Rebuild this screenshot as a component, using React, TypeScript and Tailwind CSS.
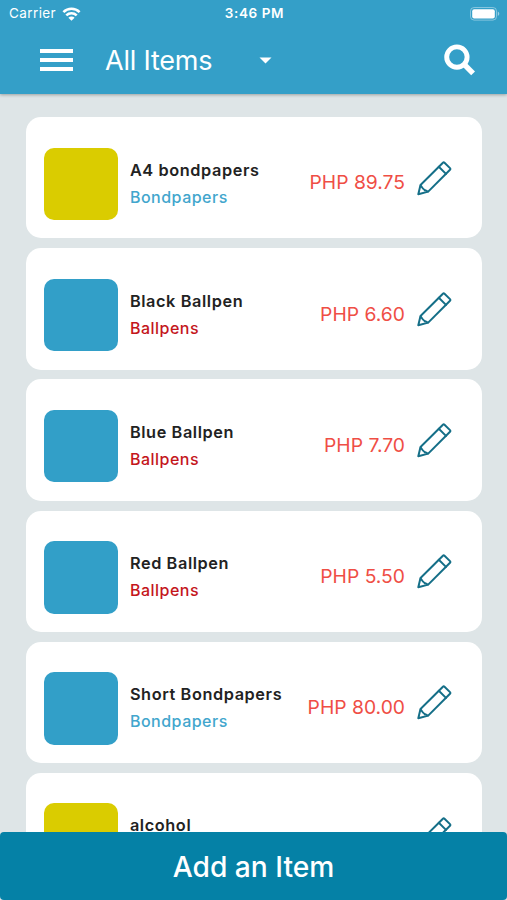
type Item = {
  name: string;
  category?: string;
  price?: string;
  color: string;
  categoryColor?: string;
};

const YELLOW = 'bg-[#dacc00]';
const BLUE = 'bg-[#329fc8]';

const items: Item[] = [
  { name: 'A4 bondpapers', category: 'Bondpapers', price: '89.75', color: YELLOW, categoryColor: 'text-[#42a6cd]' },
  { name: 'Black Ballpen', category: 'Ballpens', price: '6.60', color: BLUE, categoryColor: 'text-[#c4161c]' },
  { name: 'Blue Ballpen', category: 'Ballpens', price: '7.70', color: BLUE, categoryColor: 'text-[#c4161c]' },
  { name: 'Red Ballpen', category: 'Ballpens', price: '5.50', color: BLUE, categoryColor: 'text-[#c4161c]' },
  { name: 'Short Bondpapers', category: 'Bondpapers', price: '80.00', color: BLUE, categoryColor: 'text-[#42a6cd]' },
  { name: 'alcohol', color: YELLOW },
];

function WifiIcon() {
  return (
    <svg className="ml-[6px] h-[14px] w-[19px]" viewBox="0 0 18 14" fill="none" stroke="white" strokeWidth="2.6">
      <path d="M0.9 5.1a11.6 11.6 0 0 1 16.2 0" />
      <path d="M3.8 8.4a7.5 7.5 0 0 1 10.4 0" />
      <path d="M9 13.7 5.9 10.7a4.4 4.4 0 0 1 6.2 0Z" fill="white" stroke="none" />
    </svg>
  );
}

function BatteryIcon() {
  return (
    <svg className="h-[14px] w-[30px]" viewBox="0 0 30 14">
      <rect x="0.5" y="0.5" width="26" height="12.6" rx="3.6" fill="none" stroke="white" strokeOpacity="0.4" />
      <rect x="2.2" y="2.2" width="22.6" height="9.2" rx="2" fill="white" />
      <path d="M27.8 4.6c2 .8 2 3.6 0 4.4Z" fill="white" fillOpacity="0.5" />
    </svg>
  );
}

function SearchIcon() {
  return (
    <svg className="h-8 w-8" viewBox="0 0 32 32" fill="none" stroke="white">
      <circle cx="12.9" cy="13.1" r="10.2" strokeWidth="4.9" />
      <path d="m20.4 20.6 8.7 8.7" strokeWidth="5.4" />
    </svg>
  );
}

function PencilIcon() {
  return (
    <svg
      className="h-[35px] w-[35px]"
      viewBox="0 0 35 35"
      fill="none"
      stroke="#156f88"
      strokeWidth="2"
      strokeLinejoin="round"
      strokeLinecap="round"
    >
      <path d="M1.3 33.3 3.5 24 25.9 1.7q.8-.8 1.6 0L33 7.1q.8.8 0 1.6L11.2 30.6Z" />
      <path d="m21.8 5.8 7.2 7.1" />
      <path d="m3.8 24.6 2.3 3.1M7 28.4l.9 1M8.6 29.2l2.2 1.3" strokeWidth="1.9" />
    </svg>
  );
}

function ItemCard({ item }: { item: Item }) {
  return (
    <div className="flex h-[121.4px] shrink-0 items-start rounded-[15px] bg-white pl-[18.3px] pr-[30px]">
      <div className={`mt-[30.5px] h-[72.6px] w-[73.6px] shrink-0 rounded-[10px] ${item.color}`} />
      <div className="ml-[12px] mt-[39.5px] flex flex-col whitespace-nowrap text-base leading-[27px]">
        <span className="text-[16.3px] font-semibold tracking-[0.6px] text-[#222]">{item.name}</span>
        {item.category && (
          <span className={`font-medium tracking-[0.5px] ${item.categoryColor}`}>{item.category}</span>
        )}
      </div>
      {item.price && (
        <span className="ml-auto mt-[51.4px] whitespace-nowrap text-[19.3px] leading-[28px] text-[#ef4e45]">
          PHP {item.price}
        </span>
      )}
      <button className={item.price ? 'ml-[12px] mt-[43.7px]' : 'ml-auto mt-[43.7px]'} aria-label="Edit">
        <PencilIcon />
      </button>
    </div>
  );
}

export default function App() {
  return (
    <div className="flex h-[900px] w-[507px] flex-col overflow-hidden bg-[#dee5e7] font-['Inter','Liberation_Sans',sans-serif]">
      <header className="z-10 h-[94px] shrink-0 bg-[#349fc8] text-white shadow-[0_1px_3px_rgba(0,0,0,0.3)]">
        <div className="grid h-[27px] grid-cols-3 items-center pl-[9px] pr-[7px] text-[13.5px]">
          <div className="flex items-center">
            <span className="tracking-[0.4px]">Carrier</span>
            <WifiIcon />
          </div>
          <span className="text-center font-semibold tracking-[0.6px]">3:46 PM</span>
          <div className="flex justify-end">
            <BatteryIcon />
          </div>
        </div>
        <div className="flex h-[65px] items-center pl-[40px] pr-[31px]">
          <button className="flex w-[33px] flex-col gap-[5px]" aria-label="Menu">
            <span className="h-1 bg-white" />
            <span className="h-1 bg-white" />
            <span className="h-1 bg-white" />
          </button>
          <span className="ml-[32px] w-[154px] whitespace-nowrap pt-[3px] text-[27px] tracking-[-0.2px]">All Items</span>
          <svg className="mt-[1px] h-[7px] w-[13px]" viewBox="0 0 13 7">
            <path d="M0.5 0.4h12l-6 6.2Z" fill="white" />
          </svg>
          <button className="ml-auto" aria-label="Search">
            <SearchIcon />
          </button>
        </div>
      </header>
      <main className="flex min-h-0 flex-1 flex-col gap-[9.8px] overflow-hidden pl-[26px] pr-[25px] pt-[23px]">
        {items.map((item) => (
          <ItemCard key={item.name} item={item} />
        ))}
      </main>
      <button className="h-[68.5px] shrink-0 rounded-[4px] bg-[#0581a6] pt-[2px] text-[28.2px] font-medium text-white">
        Add an Item
      </button>
    </div>
  );
}
